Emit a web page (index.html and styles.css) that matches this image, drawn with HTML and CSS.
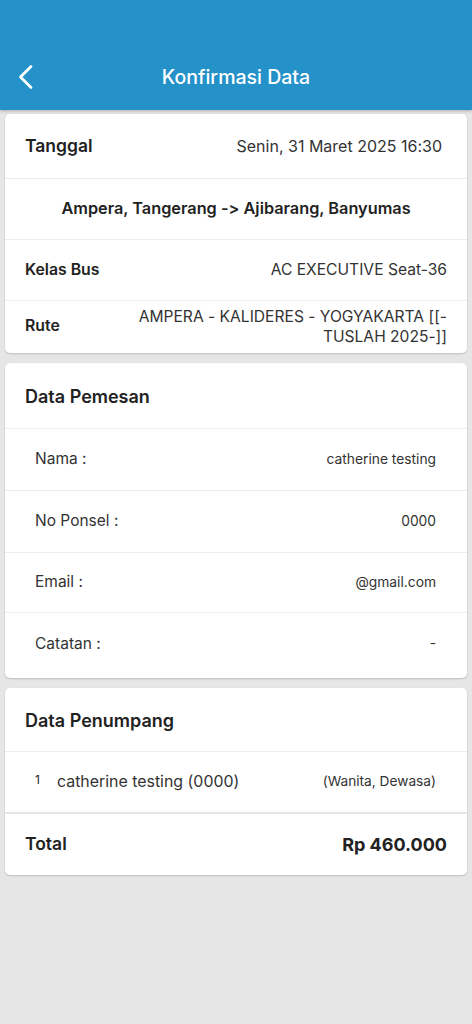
FILE: index.html
```html
<!DOCTYPE html>
<html lang="id">

<head>
  <meta charset="utf-8">
  <link rel="stylesheet" href="styles.css">
</head>

<body>
  <header class="navbar">
    <a class="nav-back" href="#">
      <svg width="18" height="26" viewBox="0 0 18 26">
        <path d="M14 2.5 L3.5 13 L14 23.5" fill="none" stroke="#fff" stroke-width="2.8" stroke-linecap="round" stroke-linejoin="round" />
      </svg>
    </a>
    <h1 class="nav-title">Konfirmasi Data</h1>
  </header>

  <div class="content">
    <!-- perjalanan -->
    <section class="card">
      <div class="row row-date">
        <span class="label-lg">Tanggal</span>
        <span class="value-date">Senin, 31 Maret 2025 16:30</span>
      </div>
      <div class="row row-route">
        Ampera, Tangerang -&gt; Ajibarang, Banyumas
      </div>
      <div class="row">
        <span class="label-md">Kelas Bus</span>
        <span class="value-md">AC EXECUTIVE Seat-36</span>
      </div>
      <div class="row row-rute">
        <span class="label-md">Rute</span>
        <span class="value-md value-wrap">AMPERA - KALIDERES - YOGYAKARTA [[-<br>TUSLAH 2025-]]</span>
      </div>
    </section>

    <!-- pemesan -->
    <section class="card">
      <div class="card-head">Data Pemesan</div>
      <div class="row row-info">
        <span class="info-label">Nama :</span>
        <span class="info-value">catherine testing</span>
      </div>
      <div class="row row-info">
        <span class="info-label">No Ponsel :</span>
        <span class="info-value">0000</span>
      </div>
      <div class="row row-info row-short">
        <span class="info-label">Email :</span>
        <span class="info-value">@gmail.com</span>
      </div>
      <div class="row row-info row-last">
        <span class="info-label">Catatan :</span>
        <span class="info-value">-</span>
      </div>
    </section>

    <!-- penumpang -->
    <section class="card">
      <div class="card-head card-head-sm">Data Penumpang</div>
      <div class="row row-info row-passenger">
        <span class="passenger">
          <span class="passenger-no">1</span>
          <span class="passenger-name">catherine testing (0000)</span>
        </span>
        <span class="passenger-type">(Wanita, Dewasa)</span>
      </div>
      <div class="row row-total">
        <span class="label-lg">Total</span>
        <span class="total-value">Rp 460.000</span>
      </div>
    </section>
  </div>
</body>

</html>
```

FILE: styles.css
```css
* {
  -webkit-box-sizing: border-box;
  box-sizing: border-box;
}

body {
  margin: 0;
  min-height: 1024px;
  background: #e6e6e6;
  color: #222;
  font: 15px/1.3 Inter, "Noto Sans", "Liberation Sans", Arial, sans-serif;
  font-feature-settings: "calt" 0, "liga" 0;
}
/* navbar */

.navbar {
  position: relative;
  height: 110px;
  padding-top: 45px;
  background: #2591c9;
  box-shadow: 0 1px 3px rgba(0, 0, 0, .25);
  display: flex;
  align-items: center;
  justify-content: center;
}

.nav-back {
  position: absolute;
  left: 17px;
  top: 64px;
  display: block;
  line-height: 0;
}

.nav-title {
  margin: 0;
  color: #fff;
  font-size: 19.5px;
  font-weight: 500;
}
/* cards */

.content {
  padding: 4px 5px 0;
}

.card {
  background: #fff;
  border-radius: 5px;
  box-shadow: 0 1px 2px rgba(0, 0, 0, .18);
  margin-bottom: 10px;
  overflow: hidden;
}

.row {
  display: flex;
  align-items: center;
  justify-content: space-between;
  padding: 0 20px;
  border-top: 1px solid #ececec;
  height: 61px;
}

.card .row:first-child {
  border-top: 0;
}

.row-date {
  height: 64px;
  padding-right: 25px;
}

.label-lg {
  font-size: 17.5px;
  font-weight: 600;
}

.value-date {
  font-size: 16px;
  color: #333;
}

.row-route {
  justify-content: center;
  font-size: 16.3px;
  font-weight: 600;
}

.label-md {
  font-size: 15.8px;
  font-weight: 600;
}

.value-md {
  font-size: 15.6px;
  color: #333;
}

.row-rute {
  height: 53px;
  padding-bottom: 1px;
}

.value-wrap {
  text-align: right;
  line-height: 20px;
}

.card-head {
  height: 65px;
  display: flex;
  align-items: center;
  padding: 2px 20px 0;
  font-size: 18px;
  font-weight: 600;
}

.card-head-sm {
  height: 63px;
}

.row-info {
  height: 62px;
  padding: 0 31px 0 30px;
}

.row-short {
  height: 60px;
}

.row-last {
  height: 66px;
  padding-bottom: 3px;
}

.info-label {
  font-size: 15.5px;
  color: #333;
}

.info-value {
  font-size: 13.8px;
  color: #333;
}
/* penumpang */

.row-passenger {
  height: 61px;
}

.passenger {
  display: flex;
  align-items: center;
}

.passenger-no {
  width: 22px;
  font-size: 12px;
  margin-top: -4px;
}

.passenger-name {
  font-size: 15.9px;
  color: #333;
}

.passenger-type {
  font-size: 13.7px;
  color: #333;
}

.row-total {
  border-top: 2px solid #e6e6e6;
  height: 63px;
  padding: 0 20px;
}

.total-value {
  font-size: 18px;
  font-weight: 700;
}
```
